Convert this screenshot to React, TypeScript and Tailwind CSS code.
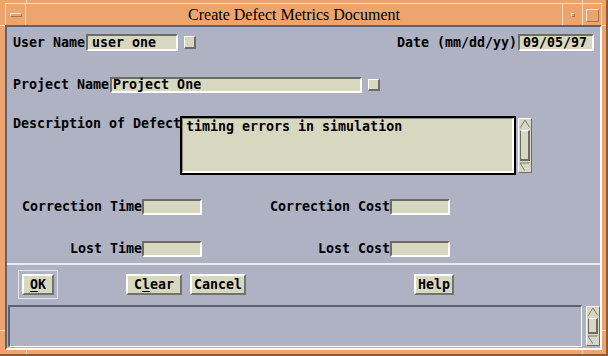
import React from "react";

const FIELD =
  "bg-[#d8d8c0] border-2 border-t-[#6b6d66] border-l-[#6b6d66] border-b-white border-r-white shrink-0 flex items-center whitespace-nowrap";
const BTN =
  "bg-[#d8d8c0] border-2 border-t-white border-l-white border-b-[#72746c] border-r-[#72746c] h-[21px] flex items-center justify-center shrink-0";
const SQ =
  "bg-[#d8d8c0] border-t border-l border-t-white border-l-white border-b-2 border-r-2 border-b-[#6b6d66] border-r-[#6b6d66] shrink-0";

function Arrow({ up }: { up: boolean }) {
  return (
    <svg width="12" height="10" viewBox="0 0 12 10" className="shrink-0">
      {up ? (
        <>
          <polygon points="6,1 11,9 1,9" fill="#d8d8c0" stroke="#7a7c74" strokeWidth="1" />
          <line x1="1.5" y1="9" x2="11" y2="9" stroke="#ffffff" strokeWidth="1" />
        </>
      ) : (
        <>
          <polygon points="1,1 11,1 6,9" fill="#d8d8c0" stroke="#7a7c74" strokeWidth="1" />
          <line x1="6" y1="9" x2="11" y2="1" stroke="#ffffff" strokeWidth="1" />
        </>
      )}
    </svg>
  );
}

function VScroll({ h }: { h: string }) {
  return (
    <div
      className={`${h} w-[14px] bg-[#d8d8c0] border-l border-t border-l-white border-t-white border-r border-b border-r-[#6b6d66] border-b-[#6b6d66] flex flex-col items-center shrink-0`}
    >
      <Arrow up />
      <div className="flex-1 w-[10px] my-[1px] border-l border-t border-l-[#6b6d66] border-t-white border-r-2 border-b-2 border-r-[#6b6d66] border-b-[#6b6d66] bg-[#d8d8c0]" />
      <Arrow up={false} />
    </div>
  );
}

export default function App() {
  return (
    <div className="w-[608px] h-[356px] bg-[#eca56f] relative overflow-hidden flex flex-col pt-[3px] pl-[5px] pr-[4px] pb-[4px] border-r-2 border-b-2 border-r-[#8c5c3a] border-b-[#8c5c3a] font-['DejaVu_Sans_Mono',monospace] font-bold text-[13.3px] leading-[16px] text-black">
      {/* frame ticks */}
      <div className="absolute left-[26px] top-0 w-px h-[3px] bg-[#f8dcc0]" />
      <div className="absolute left-[582px] top-0 w-px h-[3px] bg-[#f8dcc0]" />
      <div className="absolute left-0 top-[25px] w-[5px] h-px bg-[#f8dcc0]" />
      <div className="absolute left-[602px] top-[25px] w-[4px] h-px bg-[#f8dcc0]" />
      <div className="absolute left-[26px] top-[350px] w-px h-[6px] bg-[#f8dcc0]" />
      <div className="absolute left-[582px] top-[350px] w-px h-[6px] bg-[#f8dcc0]" />
      <div className="absolute left-0 top-[330px] w-[5px] h-px bg-[#f8dcc0]" />
      <div className="absolute left-[602px] top-[330px] w-[4px] h-px bg-[#f8dcc0]" />

      {/* title bar */}
      <div className="h-[22px] flex border-t border-t-[#f8dcc0] shrink-0">
        <div className="w-[21px] border-l border-r border-l-[#f8dcc0] border-r-[#f8dcc0] flex items-center justify-center">
          <div className="w-[12px] h-[4px] border border-t-[#fbe6d2] border-l-[#fbe6d2] border-b-[#a8724a] border-r-[#a8724a]" />
        </div>
        <div className="flex-1 flex items-center justify-center font-['Liberation_Serif',serif] font-normal text-[16px] leading-[16px]">
          Create Defect Metrics Document
        </div>
        <div className="w-[20px] border-l border-l-[#f8dcc0] flex items-center justify-center">
          <div className="w-[4px] h-[4px] border border-t-[#fbe6d2] border-l-[#fbe6d2] border-b-[#a8724a] border-r-[#a8724a]" />
        </div>
        <div className="w-[20px] border-l border-r border-l-[#f8dcc0] border-r-[#f8dcc0] flex items-center justify-center">
          <div className="w-[13px] h-[13px] mt-[2px] border border-t-[#fbe6d2] border-l-[#fbe6d2] border-b-[#a8724a] border-r-[#a8724a]" />
        </div>
      </div>

      {/* content */}
      <div className="flex-1 flex flex-col bg-[#aeb2c3] border-t-2 border-l-2 border-t-[#5e6170] border-l-[#5e6170] border-r-2 border-b-2 border-r-white border-b-white">
        {/* top panel */}
        <div className="h-[238px] shrink-0 flex flex-col pt-[7px] pl-[6px] pr-[6px] border-b-2 border-b-[#e8eaf2]">
          <div className="flex items-center h-[17px]">
            <span className="whitespace-nowrap">User Name</span>
            <div className={`${FIELD} ml-[1px] w-[92px] h-[17px] pl-[4px]`}>user one</div>
            <div className={`${SQ} ml-[6px] w-[12px] h-[13px]`} />
            <div className="flex-1" />
            <span className="whitespace-nowrap">Date (mm/dd/yy)</span>
            <div className={`${FIELD} ml-[1px] w-[76px] h-[17px] pl-[3px]`}>09/05/97</div>
          </div>

          <div className="flex items-center h-[16px] mt-[26px]">
            <span className="whitespace-nowrap">Project Name</span>
            <div className={`${FIELD} ml-[1px] w-[252px] h-[16px] pl-[1px]`}>Project One</div>
            <div className={`${SQ} ml-[6px] w-[12px] h-[12px]`} />
          </div>

          <div className="flex items-start mt-[23px]">
            <span className="w-[167px] shrink-0 whitespace-nowrap">Description of Defect</span>
            <div className="w-[336px] h-[59px] shrink-0 border-2 border-black bg-[#d8d8c0] relative">
              <div className="w-full h-full border-t border-l border-t-[#8a8b7e] border-l-[#8a8b7e] border-b-2 border-r-2 border-b-white border-r-white pl-[3px] whitespace-nowrap">
                timing errors in simulation
              </div>
            </div>
            <div className="ml-[2px] mt-[2px]">
              <VScroll h="h-[55px]" />
            </div>
          </div>

          <div className="flex items-center h-[16px] mt-[24px]">
            <span className="w-[129px] text-right whitespace-nowrap">Correction Time</span>
            <div className={`${FIELD} w-[60px] h-[16px]`} />
            <span className="w-[188px] text-right whitespace-nowrap">Correction Cost</span>
            <div className={`${FIELD} w-[60px] h-[16px]`} />
          </div>

          <div className="flex items-center h-[16px] mt-[26px]">
            <span className="w-[129px] text-right whitespace-nowrap">Lost Time</span>
            <div className={`${FIELD} w-[60px] h-[16px]`} />
            <span className="w-[188px] text-right whitespace-nowrap">Lost Cost</span>
            <div className={`${FIELD} w-[60px] h-[16px]`} />
          </div>
        </div>

        {/* bottom panel */}
        <div className="flex-1 flex flex-col">
          <div className="flex items-center mt-[5px] pl-[11px] h-[29px]">
            <div className="w-[40px] h-[29px] border border-[#e4e6ee] p-[3px] flex">
              <div className={`${BTN} w-[32px] h-[21px]`}>
                <span className="underline underline-offset-2">O</span>K
              </div>
            </div>
            <div className={`${BTN} ml-[68px] w-[56px]`}>
              C<span className="underline underline-offset-2">l</span>ear
            </div>
            <div className={`${BTN} ml-[8px] w-[56px]`}>Cancel</div>
            <div className={`${BTN} ml-[168px] w-[40px]`}>Help</div>
          </div>

          <div className="flex items-start mt-[6px] pl-[1px]">
            <div className="w-[574px] h-[42px] shrink-0 border-t-2 border-l-2 border-t-[#5e6170] border-l-[#5e6170] border-b border-r border-b-white border-r-white" />
            <div className="ml-[4px] mt-[1px]">
              <VScroll h="h-[40px]" />
            </div>
          </div>
        </div>
      </div>
    </div>
  );
}
